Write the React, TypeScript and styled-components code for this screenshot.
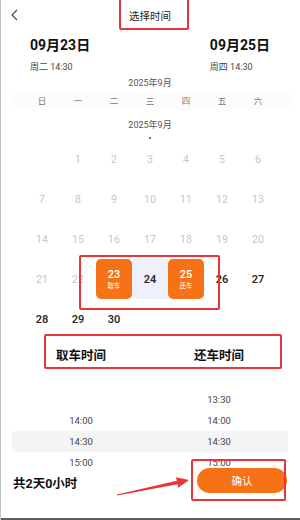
import styled, { createGlobalStyle } from 'styled-components';

const GlobalStyle = createGlobalStyle`
    html, body {
        margin: 0;
        padding: 0;
        background: #ffffff;
    }
    body {
        font-family: Roboto, "Noto Sans CJK SC", sans-serif;
        color: #333;
    }
`;

const ORANGE = '#f57316';
const RED = '#e8353a';

const Page = styled.div`
    position: relative;
    width: 300px;
    height: 520px;
    overflow: hidden;
    background: #fff;
    box-shadow: inset 1px 0 0 #c2c2c2, inset 0 -2px 0 #5e5e5e;
`;

const Header = styled.div`
    position: relative;
    height: 30px;
    display: flex;
    align-items: center;
    justify-content: center;
`;

const BackButton = styled.button`
    position: absolute;
    left: 7px;
    top: 7px;
    width: 16px;
    height: 16px;
    padding: 0;
    border: none;
    background: none;
    display: flex;
    align-items: center;
    justify-content: center;
`;

const Title = styled.div`
    font-size: 10.5px;
    color: #222;
`;

const Summary = styled.div`
    display: flex;
    justify-content: space-between;
    padding: 5px 30px 0 30px;
`;

const DateBlock = styled.div`
    display: flex;
    flex-direction: column;
    gap: 5px;
`;

const BigDate = styled.div`
    font-size: 14px;
    font-weight: 700;
    line-height: 20px;
    color: #111;
`;

const SubDate = styled.div`
    font-size: 9px;
    line-height: 14px;
    color: #444;
`;

const MonthLabel = styled.div<{ $gap: number }>`
    margin-top: ${p => p.$gap}px;
    text-align: center;
    font-size: 9px;
    line-height: 14px;
    color: #555;
`;

const WeekRow = styled.div`
    margin: 0 10px;
    padding: 0 14px;
    height: 20px;
    display: grid;
    grid-template-columns: repeat(7, 36px);
    align-items: center;
    background: #fcfcfc;
    border-radius: 4px;
`;

const WeekDay = styled.div`
    text-align: center;
    font-size: 8.5px;
    color: #777;
`;

const Dot = styled.div`
    width: 2px;
    height: 2px;
    margin: 5px auto 0;
    border-radius: 1px;
    background: #444;
`;

const DayGrid = styled.div`
    margin: 0 24px;
    display: grid;
    grid-template-columns: repeat(7, 36px);
    grid-auto-rows: 40px;
`;

type DayState = 'past' | 'start' | 'mid' | 'end' | 'future' | 'empty';

const DayCell = styled.div<{ $state: DayState }>`
    display: flex;
    flex-direction: column;
    align-items: center;
    justify-content: center;
    border-radius: ${p => (p.$state === 'start' || p.$state === 'end' ? '5px' : '0')};
    background: ${p =>
        p.$state === 'start' || p.$state === 'end'
            ? ORANGE
            : p.$state === 'mid'
            ? '#eef1fa'
            : 'transparent'};
    color: ${p =>
        p.$state === 'past' ? '#c6c6c6' : p.$state === 'start' || p.$state === 'end' ? '#fff' : '#2b2b2b'};
    font-size: ${p => (p.$state === 'past' ? '10.5px' : '11px')};
    font-weight: ${p => (p.$state === 'past' ? 400 : 600)};
`;

const DayTag = styled.div`
    margin-top: 1px;
    font-size: 6.5px;
    font-weight: 400;
    line-height: 8px;
`;

const PickerHead = styled.div`
    margin-top: 1px;
    height: 28px;
    padding: 0 12px;
    display: grid;
    grid-template-columns: 1fr 1fr;
    align-items: center;
`;

const HeadLabel = styled.div`
    text-align: center;
    font-size: 12.5px;
    font-weight: 700;
    color: #111;
    padding-top: 1px;
`;

const Picker = styled.div`
    padding: 21px 12px 0 12px;
`;

const TimeRow = styled.div<{ $active?: boolean }>`
    height: 21px;
    display: grid;
    grid-template-columns: 1fr 1fr;
    align-items: center;
    background: ${p => (p.$active ? '#f5f5f5' : 'transparent')};
`;

const TimeText = styled.div`
    text-align: center;
    font-size: 9.5px;
    color: #444;
`;

const Footer = styled.div`
    position: absolute;
    left: 0;
    right: 0;
    bottom: 27px;
    height: 25px;
    padding: 0 13px;
    display: flex;
    align-items: center;
    justify-content: space-between;
`;

const Total = styled.div`
    font-size: 12.5px;
    font-weight: 700;
    color: #111;
    margin-top: 3px;
`;

const ConfirmButton = styled.button`
    width: 90px;
    height: 25px;
    border: none;
    border-radius: 13px;
    background: ${ORANGE};
    color: #fff;
    font-family: Roboto, "Noto Sans CJK SC", sans-serif;
    font-size: 10.5px;
    padding: 0;
`;

const Mark = styled.div<{ $x: number; $y: number; $w: number; $h: number }>`
    position: absolute;
    left: ${p => p.$x}px;
    top: ${p => p.$y}px;
    width: ${p => p.$w}px;
    height: ${p => p.$h}px;
    box-sizing: border-box;
    border: 2px solid ${RED};
    border-radius: 2px;
    pointer-events: none;
`;

const Arrow = styled.svg`
    position: absolute;
    left: 110px;
    top: 470px;
    width: 85px;
    height: 30px;
    pointer-events: none;
`;

const weekDays = ['日', '一', '二', '三', '四', '五', '六'];

function dayState(d: number): DayState {
    if (d === 0) return 'empty';
    if (d < 23) return 'past';
    if (d === 23) return 'start';
    if (d === 24) return 'mid';
    if (d === 25) return 'end';
    return 'future';
}

// 2025年9月1日 是周一
const days: number[] = [0, ...Array.from({ length: 30 }, (_, i) => i + 1)];

const times = [
    { pick: '', back: '13:30' },
    { pick: '14:00', back: '14:00' },
    { pick: '14:30', back: '14:30', active: true },
    { pick: '15:00', back: '15:00' },
];

export default function App() {
    return (
        <Page>
            <GlobalStyle />
            <Header>
                <BackButton>
                    <svg width="10" height="12" viewBox="0 0 10 12">
                        <path d="M7 1 L2 6 L7 11" fill="none" stroke="#444" strokeWidth="1.1" />
                    </svg>
                </BackButton>
                <Title>选择时间</Title>
            </Header>

            <Summary>
                <DateBlock>
                    <BigDate>09月23日</BigDate>
                    <SubDate>周二 14:30</SubDate>
                </DateBlock>
                <DateBlock>
                    <BigDate>09月25日</BigDate>
                    <SubDate>周四 14:30</SubDate>
                </DateBlock>
            </Summary>

            <MonthLabel $gap={2}>2025年9月</MonthLabel>
            <WeekRow>
                {weekDays.map(w => (
                    <WeekDay key={w}>{w}</WeekDay>
                ))}
            </WeekRow>
            <MonthLabel $gap={8}>2025年9月</MonthLabel>
            <Dot />

            <DayGrid>
                {days.map((d, i) => {
                    const state = dayState(d);
                    return (
                        <DayCell key={i} $state={state}>
                            {d > 0 ? d : ''}
                            {state === 'start' && <DayTag>取车</DayTag>}
                            {state === 'end' && <DayTag>还车</DayTag>}
                        </DayCell>
                    );
                })}
            </DayGrid>

            <PickerHead>
                <HeadLabel>取车时间</HeadLabel>
                <HeadLabel>还车时间</HeadLabel>
            </PickerHead>

            <Picker>
                {times.map((t, i) => (
                    <TimeRow key={i} $active={t.active}>
                        <TimeText>{t.pick}</TimeText>
                        <TimeText>{t.back}</TimeText>
                    </TimeRow>
                ))}
            </Picker>

            <Footer>
                <Total>共2天0小时</Total>
                <ConfirmButton>确认</ConfirmButton>
            </Footer>

            <Mark $x={119} $y={-2} $w={70} $h={32} />
            <Mark $x={79} $y={255} $w={141} $h={55} />
            <Mark $x={44} $y={334} $w={238} $h={35} />
            <Mark $x={191} $y={459} $w={95} $h={42} />
            <Arrow viewBox="0 0 85 30">
                <polygon
                    points="7.1,25.5 67.6,14.2 68.3,17.8 79,10 65.8,7.3 66.9,10.7 6.9,24.5"
                    fill={RED}
                />
            </Arrow>
        </Page>
    );
}
